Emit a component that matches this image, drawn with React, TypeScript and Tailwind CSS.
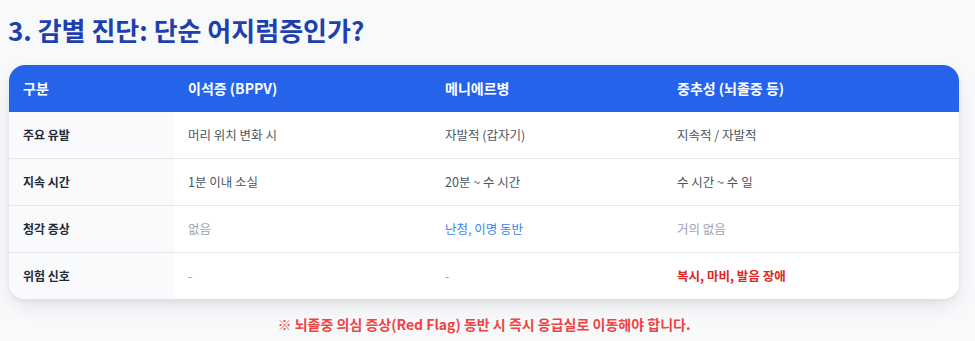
import React from 'react'

type Tone = 'normal' | 'muted' | 'blue' | 'dash' | 'danger'

type Cell = { text: string; tone?: Tone }

const rows: { label: string; cells: Cell[] }[] = [
  {
    label: '주요 유발',
    cells: [{ text: '머리 위치 변화 시' }, { text: '자발적 (갑자기)' }, { text: '지속적 / 자발적' }],
  },
  {
    label: '지속 시간',
    cells: [{ text: '1분 이내 소실' }, { text: '20분 ~ 수 시간' }, { text: '수 시간 ~ 수 일' }],
  },
  {
    label: '청각 증상',
    cells: [
      { text: '없음', tone: 'muted' },
      { text: '난청, 이명 동반', tone: 'blue' },
      { text: '거의 없음', tone: 'muted' },
    ],
  },
  {
    label: '위험 신호',
    cells: [
      { text: '-', tone: 'dash' },
      { text: '-', tone: 'dash' },
      { text: '복시, 마비, 발음 장애', tone: 'danger' },
    ],
  },
]

const toneClass: Record<Tone, string> = {
  normal: 'text-[#4b5563]',
  muted: 'text-[#9ca3af]',
  blue: 'text-[#3b82f6]',
  dash: 'text-[#f87171]',
  danger: 'text-[#dc2626] font-bold',
}

const cols = 'grid grid-cols-[165px_257px_232px_1fr]'

export default function App() {
  return (
    <div className="min-h-screen bg-[#f8f9fb] pl-[9px] pt-[13px] font-['Noto_Sans_CJK_KR','Noto_Sans',sans-serif]">
      <div className="w-[950px]">
        <h1 className="-ml-px text-[26px] font-bold leading-[34px] text-[#1e40af]">3. 감별 진단: 단순 어지럼증인가?</h1>

        <div className="mt-[18px] overflow-hidden rounded-[16px] bg-white shadow-[0_8px_20px_-4px_rgba(15,23,42,0.12),0_2px_6px_rgba(15,23,42,0.05)]">
          <div className={`${cols} bg-[#2563eb] text-[14px] font-bold leading-[21px] text-white`}>
            <div className="px-[14px] py-[13px]">구분</div>
            <div className="px-[14px] py-[13px]">이석증 (BPPV)</div>
            <div className="px-[14px] py-[13px]">메니에르병</div>
            <div className="px-[14px] py-[13px]">중추성 (뇌졸중 등)</div>
          </div>

          {rows.map((r, i) => (
            <div
              key={r.label}
              className={`${cols} text-[12.5px] leading-[20px] ${i < rows.length - 1 ? 'border-b border-[#e5e7eb]' : ''}`}
            >
              <div className="bg-[#f8fafc] px-[14px] py-[13px] text-[12px] font-bold text-[#1f2937]">{r.label}</div>
              {r.cells.map((c, j) => (
                <div key={j} className={`px-[14px] py-[13px] ${toneClass[c.tone ?? 'normal']}`}>
                  {c.text}
                </div>
              ))}
            </div>
          ))}
        </div>

        <p className="mt-[15px] text-center text-[14px] font-bold leading-[20px] text-[#ef4444]">
          ※ 뇌졸중 의심 증상(Red Flag) 동반 시 즉시 응급실로 이동해야 합니다.
        </p>
      </div>
    </div>
  )
}
